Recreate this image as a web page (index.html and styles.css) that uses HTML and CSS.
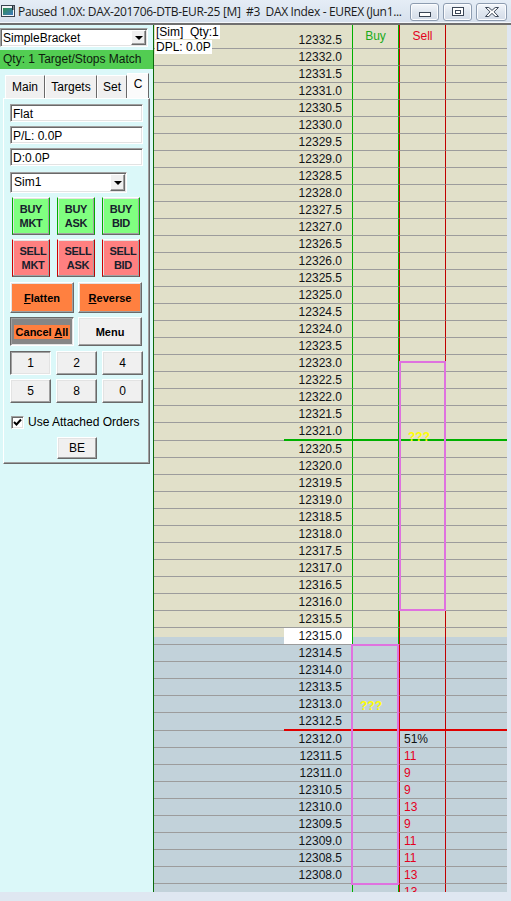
FILE: index.html
```html
<!DOCTYPE html>
<html lang="en">
<head>
    <meta charset="UTF-8">
    <title>DAX Index - EUREX</title>
    <link rel="stylesheet" href="styles.css">
</head>
<body>
    <div class="window">
        <div class="titlebar">
            <svg class="app-icon" width="14" height="12" viewBox="0 0 14 12">
                <defs>
                    <linearGradient id="screen" x1="0" y1="0" x2="1" y2="1">
                        <stop offset="0" stop-color="#2f8f4f"/>
                        <stop offset="1" stop-color="#3c78c0"/>
                    </linearGradient>
                </defs>
                <rect x="0.5" y="0.5" width="13" height="11" fill="#f4f6f8" stroke="#3a4450"/>
                <rect x="2" y="3" width="10" height="7" fill="url(#screen)"/>
                <rect x="11" y="1" width="1.5" height="4" fill="#1d2a36"/>
            </svg>
            <span class="title">Paused 1.0X: DAX-201706-DTB-EUR-25 [M]  #3  DAX Index - EUREX (Jun1...</span>
            <div class="win-buttons">
                <span class="win-btn minimize">
                    <svg width="12" height="6" viewBox="0 0 12 6"><rect x="0.5" y="0.5" width="11" height="4" fill="#fff" stroke="#3b4656"/></svg>
                </span>
                <span class="win-btn restore">
                    <svg width="12" height="10" viewBox="0 0 12 10"><rect x="0.5" y="0.5" width="11" height="8" fill="#fff" stroke="#3b4656"/><rect x="3.5" y="3.5" width="5" height="3" fill="none" stroke="#3b4656"/></svg>
                </span>
                <span class="win-btn close">
                    <svg width="14" height="10" viewBox="0 0 14 10"><polygon points="0.5,0.5 3.8,0.5 7,3.4 10.2,0.5 13.5,0.5 9,4.8 13.5,9.5 10.2,9.5 7,6.4 3.8,9.5 0.5,9.5 5,4.8" fill="#fff" stroke="#3b4656"/></svg>
                </span>
            </div>
        </div>

        <div class="client">
            <div class="side">
                <div class="combo strategy">
                    <span class="combo-text">SimpleBracket</span>
                    <span class="drop"><i></i></span>
                </div>
                <div class="status-bar">Qty: 1 Target/Stops Match</div>

                <div class="tabs">
                    <span class="tab tab-main">Main</span>
                    <span class="tab tab-targets">Targets</span>
                    <span class="tab tab-set">Set</span>
                    <span class="tab tab-c active">C</span>
                </div>

                <div class="tab-panel">
                    <div class="field">Flat</div>
                    <div class="field">P/L: 0.0P</div>
                    <div class="field">D:0.0P</div>

                    <div class="combo account">
                        <span class="combo-text">Sim1</span>
                        <span class="drop"><i></i></span>
                    </div>

                    <div class="order-grid">
                        <button class="btn order buy">BUY<br>MKT</button>
                        <button class="btn order buy">BUY<br>ASK</button>
                        <button class="btn order buy">BUY<br>BID</button>
                        <button class="btn order sell">SELL<br>MKT</button>
                        <button class="btn order sell">SELL<br>ASK</button>
                        <button class="btn order sell">SELL<br>BID</button>
                    </div>

                    <div class="action-grid">
                        <button class="btn action orange"><u>F</u>latten</button>
                        <button class="btn action orange"><u>R</u>everse</button>
                        <button class="btn action pressed cancel"><span class="hl">Cancel <u>A</u>ll</span></button>
                        <button class="btn action">Menu</button>
                    </div>

                    <div class="qty-grid">
                        <button class="btn qty pressed">1</button>
                        <button class="btn qty">2</button>
                        <button class="btn qty">4</button>
                        <button class="btn qty">5</button>
                        <button class="btn qty">8</button>
                        <button class="btn qty">0</button>
                    </div>

                    <label class="check-row">
                        <span class="check">
                            <svg width="9" height="9" viewBox="0 0 9 9"><polyline points="1,4 3.5,6.5 8,1.5" fill="none" stroke="#000" stroke-width="2"/></svg>
                        </span>
                        Use Attached Orders
                    </label>

                    <button class="btn be">BE</button>
                </div>
            </div>

            <div class="ladder">
                <div id="ladder-rows"></div>

                <div class="info">
                    <span>[Sim]  Qty:1</span>
                    <span>DPL: 0.0P</span>
                </div>

                <div class="working sell-stop"></div>
                <div class="working buy-stop"></div>
                <span class="unknown sell-unknown">???</span>
                <span class="unknown buy-unknown">???</span>
            </div>
        </div>
    </div>

    <script>
        const rowsEl = document.getElementById('ladder-rows');
        const topPrice = 12332.5;
        const tick = 0.5;
        const rowCount = 51;
        const insideRow = 35;   // mid price row, split between offer and bid colours
        const lastTradeRow = 23; // green line below
        const bidRow = 40;       // red line below

        const sellDepth = { 41: '51%', 42: 11, 43: 9, 44: 9, 45: 13, 46: 9, 47: 11, 48: 11, 49: 13, 50: 13 };

        for (let i = 0; i < rowCount; i++) {
            const row = document.createElement('div');
            row.className = 'row';
            if (i === 0) row.classList.add('head');

            if (i < insideRow) row.classList.add('offer');
            else if (i === insideRow) row.classList.add('inside');
            else row.classList.add('bid');

            if (i === lastTradeRow) row.classList.add('green-line');
            if (i === bidRow) row.classList.add('red-line');

            const cells = ['vol', 'price', 'buy', 'sell', 'extra'].map(name => {
                const cell = document.createElement('div');
                cell.className = name;
                row.appendChild(cell);
                return cell;
            });

            // the last, half drawn row has no price painted yet
            if (i < rowCount - 1) {
                cells[1].textContent = (topPrice - i * tick).toFixed(1);
            }

            if (i === 0) {
                cells[2].textContent = 'Buy';
                cells[3].textContent = 'Sell';
            }

            if (sellDepth[i] !== undefined) {
                cells[3].textContent = sellDepth[i];
                if (typeof sellDepth[i] === 'string') cells[3].classList.add('pct');
            }

            rowsEl.appendChild(row);
        }
    </script>
</body>
</html>
```

FILE: styles.css
```css
* {
    box-sizing: border-box;
}

body {
    margin: 0;
    font-family: "Liberation Sans", Arial, sans-serif;
    font-size: 12px;
    color: #000;
    background: #dfe7f1;
}

.window {
    width: 511px;
    height: 901px;
    overflow: hidden;
    background: #dfe7f1;
}

/* title bar */
.titlebar {
    height: 23px;
    display: flex;
    align-items: center;
    background: linear-gradient(#e5edf6, #d7e1ed);
    border-bottom: 1px solid #f4f7fb;
}

.app-icon {
    flex: none;
    margin-left: 1px;
}

.title {
    flex: none;
    width: 389px;
    margin-left: 3px;
    font-family: "Open Sans", "Noto Sans", sans-serif;
    font-size: 12px;
    letter-spacing: -0.34px;
    color: #1b1b1b;
    white-space: pre;
}

.win-buttons {
    display: flex;
    gap: 4px;
    margin-left: auto;
    margin-right: 4px;
    align-self: flex-start;
    margin-top: 3px;
}

.win-btn {
    width: 29px;
    height: 18px;
    display: flex;
    align-items: center;
    justify-content: center;
    border: 1px solid #8d9cb0;
    border-radius: 3px;
    background: linear-gradient(#f4f7fb, #dfe6ef 50%, #d3dce8);
    box-shadow: inset 0 0 0 1px #fbfcfe;
}

.win-btn.minimize {
    padding-top: 6px;
}

.win-btn.close {
    width: 31px;
}

.client {
    display: flex;
    height: 869px;
    border-top: 2px solid #6f6f6f;
}

/* left order panel */
.side {
    flex: none;
    width: 153px;
    background: #dbf8f9;
}

.combo {
    display: flex;
    align-items: stretch;
    background: #fff;
    border: 1px solid;
    border-color: #a0a0a0 #fff #fff #a0a0a0;
    box-shadow: inset 1px 1px 0 #696969, inset -1px -1px 0 #e3e3e3;
    padding: 1px;
}

.combo-text {
    flex: 1;
    padding-left: 1px;
    line-height: 16px;
}

.drop {
    width: 15px;
    display: flex;
    align-items: center;
    justify-content: center;
    background: #f0f0f0;
    border: 1px solid;
    border-color: #fff #696969 #696969 #fff;
    box-shadow: inset -1px -1px 0 #a0a0a0;
}

.drop i {
    width: 0;
    height: 0;
    border-left: 4px solid transparent;
    border-right: 4px solid transparent;
    border-top: 4px solid #000;
}

.combo.strategy {
    width: 148px;
    height: 19px;
    margin-top: 3px;
}

.status-bar {
    height: 19px;
    margin-top: 3px;
    padding-left: 3px;
    line-height: 19px;
    background: #52cd52;
    color: #0e1a0e;
}

.tabs {
    display: flex;
    align-items: flex-end;
    height: 25px;
    margin-top: 4px;
    padding-left: 5px;
}

.tab {
    height: 23px;
    padding-top: 4px;
    text-align: center;
    background: #f0f0f0;
    border: 1px solid;
    border-color: #fff #696969 transparent #fff;
    border-bottom: none;
}

.tab-main { width: 40px; }
.tab-targets { width: 52px; }
.tab-set { width: 30px; }
.tab-c { width: 22px; }

.tab.active {
    height: 25px;
    padding-top: 3px;
    background: #fbfbfb;
}

.tab-panel {
    width: 147px;
    height: 366px;
    margin-left: 3px;
    padding: 5px 0 0 6px;
    border: 1px solid;
    border-color: #fff #696969 #696969 #fff;
    box-shadow: inset -1px -1px 0 #a0a0a0;
}

.field {
    width: 133px;
    height: 18px;
    margin-bottom: 4px;
    padding: 2px 0 0 2px;
    line-height: 14px;
    background: #fff;
    border: 1px solid;
    border-color: #a0a0a0 #fff #fff #a0a0a0;
    box-shadow: inset 1px 1px 0 #696969, inset -1px -1px 0 #e3e3e3;
}

.combo.account {
    width: 117px;
    height: 21px;
    margin-top: 6px;
}

.combo.account .combo-text {
    line-height: 17px;
    padding-left: 2px;
}

.btn {
    margin: 0;
    padding: 0;
    font: inherit;
    color: #000;
    background: #f0f0f0;
    border: 1px solid;
    border-color: #fff #696969 #696969 #fff;
    box-shadow: inset -1px -1px 0 #a0a0a0, inset 1px 1px 0 #e3e3e3;
}

.btn.pressed {
    border-color: #696969 #fff #fff #696969;
    box-shadow: inset 1px 1px 0 #a0a0a0, inset -1px -1px 0 #e3e3e3;
}

.order-grid {
    display: grid;
    grid-template-columns: 38px 38px 38px;
    grid-auto-rows: 38px;
    column-gap: 7px;
    row-gap: 4px;
    margin: 4px 0 0 2px;
}

.btn.order {
    font-size: 11px;
    font-weight: bold;
    line-height: 14px;
    letter-spacing: -0.3px;
    color: #17202c;
}

.btn.buy {
    background: #80ff80;
}

.btn.sell {
    background: #ff8080;
}

.action-grid {
    display: grid;
    grid-template-columns: 64px 64px;
    grid-template-rows: 31px 29px;
    column-gap: 4px;
    row-gap: 4px;
    margin-top: 5px;
}

.btn.action {
    font-size: 11px;
    font-weight: bold;
}

.btn.orange {
    background: #ff8040;
}

.btn.cancel {
    background: #868686;
}

.hl {
    padding: 1px 2px;
    background: #ff7f3f;
}

.qty-grid {
    display: grid;
    grid-template-columns: 41px 41px 41px;
    grid-auto-rows: 24px;
    column-gap: 5px;
    row-gap: 4px;
    margin-top: 5px;
}

.btn.qty {
    font-size: 12px;
}

.check-row {
    display: flex;
    align-items: center;
    gap: 4px;
    margin: 13px 0 0 1px;
    line-height: 13px;
}

.check {
    width: 13px;
    height: 13px;
    display: flex;
    align-items: center;
    justify-content: center;
    background: #fff;
    border: 1px solid;
    border-color: #a0a0a0 #fff #fff #a0a0a0;
    box-shadow: inset 1px 1px 0 #696969, inset -1px -1px 0 #e3e3e3;
}

.btn.be {
    display: block;
    width: 40px;
    height: 22px;
    margin: 8px 0 0 47px;
}

/* price ladder */
.ladder {
    position: relative;
    flex: none;
    width: 354px;
    border-left: 1px solid #0b6b0b;
    overflow: hidden;
}

.row {
    display: grid;
    grid-template-columns: 130px 68px 47px 47px 61px;
}

.row.offer {
    background: #e1e0c9;
}

.row.bid {
    background: #c2d2da;
}

.row.inside {
    background: linear-gradient(#e1e0c9 50%, #c2d2da 50%);
}

.row > div {
    height: 17px;
    line-height: 16px;
    border-bottom: 1px solid #9c9c9c;
    white-space: nowrap;
}

.row.head > div {
    height: 24px;
    padding-top: 7px;
}

.row.head .buy,
.row.head .sell {
    padding-top: 3px;
}

.price {
    padding-right: 10px;
    text-align: right;
    color: #111418;
}

.row.inside .price {
    background: #fff;
}

.buy {
    text-align: center;
    color: #1aab1a;
    border-left: 1px solid #00b000;
    border-right: 1px solid #00b000;
}

.sell {
    padding-left: 4px;
    color: #e3001e;
    border-left: 1px solid #d00000;
    border-right: 1px solid #c00000;
}

.row.head .sell {
    padding-left: 0;
    text-align: center;
}

.sell.pct {
    color: #111;
}

.row.green-line > div,
.row.red-line > div {
    height: 18px;
}

.row.green-line > div:not(.vol) {
    border-bottom: 2px solid #00b000;
}

.row.red-line > div:not(.vol) {
    border-bottom: 2px solid #e00000;
}

.info {
    position: absolute;
    left: 1px;
    top: 0;
    display: flex;
    flex-direction: column;
    align-items: flex-start;
    gap: 1px;
}

.info span {
    padding: 0 1px;
    line-height: 14px;
    background: #fff;
    white-space: pre;
}

.working {
    position: absolute;
    border: 2px solid #df72df;
}

.sell-stop {
    left: 245px;
    top: 336px;
    width: 47px;
    height: 250px;
}

.buy-stop {
    left: 197px;
    top: 619px;
    width: 48px;
    height: 241px;
}

.unknown {
    position: absolute;
    font-weight: bold;
    line-height: 14px;
    color: #ffff00;
}

.sell-unknown {
    left: 254px;
    top: 405px;
}

.buy-unknown {
    left: 206px;
    top: 674px;
}
```
